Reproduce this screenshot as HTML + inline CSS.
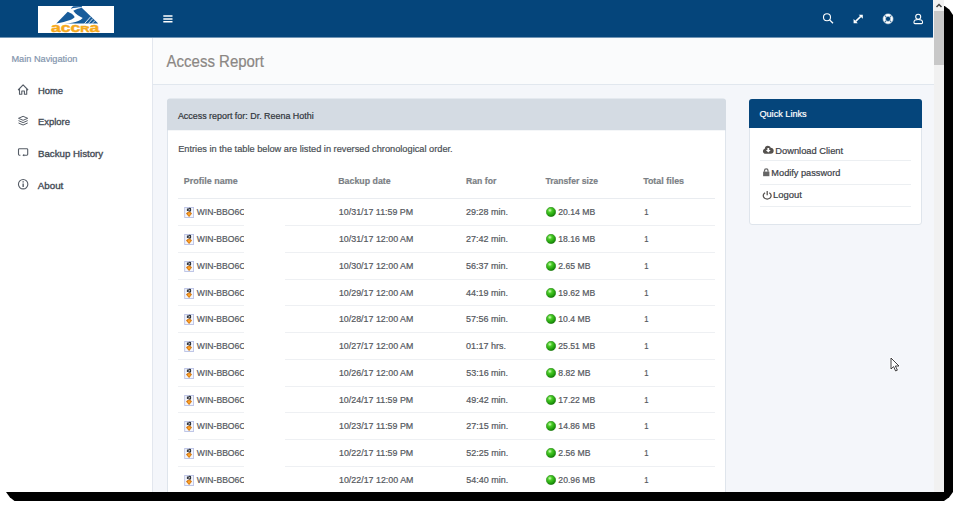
<!DOCTYPE html>
<html><head><meta charset="utf-8"><title>Access Report</title>
<style>
html,body{margin:0;padding:0;background:#fff;}
body{width:959px;height:507px;position:relative;overflow:hidden;font-family:"Liberation Sans",sans-serif;}
#app{position:absolute;left:0;top:0;width:944px;height:492px;overflow:hidden;}
.r{position:absolute;display:block;}
.t{position:absolute;white-space:nowrap;line-height:1;transform-origin:0 0;}
</style></head><body>
<div class="r" style="left:6px;top:5.5px;width:947px;height:495.5px;background:#000;clip-path:polygon(0 0,938px 0,943.3px 3.9px,947px 9.5px,947px 486.5px,943.2px 491.8px,938px 495.5px,8.5px 495.5px,3.8px 491.7px,0 486.5px);"></div>
<div id="app">
<div class="r" style="left:0px;top:0px;width:944px;height:492px;background:#f4f6fa;"></div>
<div class="r" style="left:0px;top:38px;width:152px;height:454px;background:#fff;"></div>
<div class="r" style="left:152px;top:38px;width:1px;height:454px;background:#e3e7ee;"></div>
<div class="r" style="left:153px;top:38px;width:781px;height:46px;background:#fafbfc;"></div>
<div class="r" style="left:153px;top:84px;width:781px;height:1px;background:#e1e7ee;"></div>
<div class="r" style="left:0px;top:0px;width:933px;height:37px;background:#05457b;"></div>
<div class="r" style="left:0px;top:37px;width:933px;height:1px;background:rgba(5,69,123,0.55);"></div>
<div class="r" style="left:934px;top:0px;width:10px;height:492px;background:#f1f1f1;"></div>
<div class="r" style="left:934px;top:11.4px;width:10px;height:54px;background:#c8c8c8;"></div>
<svg class="r" style="left:934px;top:0" width="10" height="11" viewBox="0 0 10 11"><path d="M2.5 7.1 L5 4.5 L7.5 7.1" fill="none" stroke="#454545" stroke-width="1.5"/></svg>
<div class="r" style="left:38px;top:6px;width:76px;height:27px;background:#fff;"></div>
<svg class="r" style="left:52px;top:5px" width="50" height="29" viewBox="0 0 874 507">
<g fill="#185c9b">
<path d="M75 324 L275 118 C322 136 376 166 396 211 C384 246 270 290 75 324 Z"/>
<path d="M372 99 C420 72 480 56 520 48 L808 324 L75 324 C280 323 455 318 537 226 C490 202 412 160 372 99 Z"/>
<path d="M328 66 C345 45 355 30 372 22 L520 18 L524 40 C450 40 390 50 328 66 Z"/>
</g>
<path d="M568 326 L676 205 M633 326 L714 238 M698 326 L752 272" stroke="#fff" stroke-width="15" fill="none"/>
</svg>
<svg class="r" style="left:38px;top:6px" width="76" height="27" viewBox="38 6 76 27"><text x="51" y="32" font-family="Liberation Sans" font-weight="bold" font-size="13" textLength="48.4" lengthAdjust="spacingAndGlyphs" fill="#f6a91b" stroke="#f6a91b" stroke-width="0.45">acc<tspan font-size="9.6">R</tspan>a</text></svg>
<svg class="r" style="left:160px;top:12px" width="16" height="14" viewBox="160 12 16 14"><path d="M163.3 16.1 H172.5 M163.3 18.9 H172.5 M163.3 21.7 H172.5" stroke="#fff" stroke-width="1.5"/></svg>
<svg class="r" style="left:820px;top:10px" width="110" height="18" viewBox="820 10 110 18" fill="none" stroke="#fff">
<circle cx="827" cy="17.3" r="3.5" stroke-width="1.1"/><path d="M829.6 19.9 L833 23.2" stroke-width="1.3"/>
<path d="M855.6 21.4 L860.8 16.4" stroke-width="1.5"/><path d="M858.7 14.7 H862.8 V18.8 Z M853.6 19 V23.2 H857.8 Z" fill="#fff" stroke="none"/>
<circle cx="888.05" cy="18.85" r="3.75" stroke-width="2.3" stroke="#fff"/><path d="M884.3 15.1 L891.8 22.6 M891.8 15.1 L884.3 22.6" stroke="#05457b" stroke-width="1.1" opacity="0.75"/>
<circle cx="888.05" cy="18.85" r="5" stroke-width="0.5"/><circle cx="888.05" cy="18.85" r="2.6" stroke-width="0.5"/>
<circle cx="918.2" cy="16.7" r="2.5" stroke-width="1.1"/><path d="M914 22.8 V22 C914 20.2 915.6 19.5 918.2 19.5 C920.9 19.5 922.5 20.2 922.5 22 V22.8 Q922.5 23.6 921.6 23.6 H914.9 Q914 23.6 914 22.8 Z" stroke-width="1.1" stroke-linejoin="round"/>
</svg>
<svg class="r" style="left:16px;top:82px" width="16" height="114" viewBox="16 82 16 114" fill="none" stroke="#555c66" stroke-width="1.1" stroke-linejoin="round">
<path d="M18.1 90 L23.1 84.8 L28.1 90 M19.5 88.9 V94.3 H21.8 V91 H24.4 V94.3 H26.7 V88.9"/>
<path d="M23.1 116.3 L27.7 118.3 L23.1 120.3 L18.5 118.3 Z M18.5 120.6 L23.1 122.6 L27.7 120.6 M18.5 123 L23.1 125 L27.7 123" stroke-width="1"/>
<path d="M20.4 155.2 H19.4 Q18.5 155.2 18.5 154.3 V149.6 Q18.5 148.7 19.4 148.7 H26.8 Q27.7 148.7 27.7 149.6 V154.3 Q27.7 155.2 26.8 155.2 H23"/><path d="M24.2 153.9 L22.4 155.2 L24.2 156.5 Z" fill="#555c66" stroke="none"/>
<circle cx="23.15" cy="184.2" r="4.7"/><path d="M23.15 183.5 V186.9 M23.15 181.2 V182.5" stroke-width="1.4"/>
</svg>
<div class="r" style="left:167px;top:99px;width:559px;height:400px;background:#fff;border:1px solid #dfe5ec;border-radius:3px 3px 0 0;box-sizing:border-box;"></div>
<svg class="r" style="left:166px;top:97px" width="562" height="35" viewBox="166 97 562 35"><path d="M167 130.3 V101.5 Q167 98.5 170 98.5 H723 Q726 98.5 726 101.5 V130.3 Z" fill="#d4dbe3"/></svg>
<div class="r" style="left:178px;top:198px;width:537px;height:1px;background:#e9ecf0;"></div>
<svg width="0" height="0" style="position:absolute"><defs><radialGradient id="g" cx="0.38" cy="0.32" r="0.75"><stop offset="0" stop-color="#d4ffbe"/><stop offset="0.3" stop-color="#49cc26"/><stop offset="0.75" stop-color="#1f9a0c"/><stop offset="1" stop-color="#0d6604"/></radialGradient></defs></svg>
<div class="r" style="left:178px;top:225.0px;width:537px;height:1px;background:#eef0f3;"></div>
<svg class="r" style="left:184px;top:206px" width="10" height="12" viewBox="0 0 10 12"><rect x="0.7" y="1.5" width="8.9" height="10" fill="#f3f6fd" stroke="#b9c0e4" stroke-width="0.9"/><path d="M3.4 2.4 V5.1 M4.8 2.8 Q4.8 2.3 5.7 2.3 Q6.6 2.3 6.6 3 V4.4 Q6.6 5.1 5.7 5.1 Q4.8 5.1 4.8 4.4 Z" stroke="#23262f" stroke-width="1.05" fill="none"/><path d="M4 5.7 H6.2 L8 7.6 L5.1 10.9 L2 7.6 Z" fill="#cf720f"/><circle cx="5.1" cy="7.9" r="1.55" fill="#f9a02a"/></svg>
<svg class="r" style="left:546px;top:207.40px" width="10" height="10" viewBox="0 0 10 10"><circle cx="5" cy="5" r="4.7" fill="url(#g)" stroke="#1c7d0c" stroke-width="0.5"/></svg>
<div class="r" style="left:178px;top:251.75px;width:537px;height:1px;background:#eef0f3;"></div>
<svg class="r" style="left:184px;top:233px" width="10" height="12" viewBox="0 0 10 12"><rect x="0.7" y="1.5" width="8.9" height="10" fill="#f3f6fd" stroke="#b9c0e4" stroke-width="0.9"/><path d="M3.4 2.4 V5.1 M4.8 2.8 Q4.8 2.3 5.7 2.3 Q6.6 2.3 6.6 3 V4.4 Q6.6 5.1 5.7 5.1 Q4.8 5.1 4.8 4.4 Z" stroke="#23262f" stroke-width="1.05" fill="none"/><path d="M4 5.7 H6.2 L8 7.6 L5.1 10.9 L2 7.6 Z" fill="#cf720f"/><circle cx="5.1" cy="7.9" r="1.55" fill="#f9a02a"/></svg>
<svg class="r" style="left:546px;top:234.40px" width="10" height="10" viewBox="0 0 10 10"><circle cx="5" cy="5" r="4.7" fill="url(#g)" stroke="#1c7d0c" stroke-width="0.5"/></svg>
<div class="r" style="left:178px;top:278.5px;width:537px;height:1px;background:#eef0f3;"></div>
<svg class="r" style="left:184px;top:260px" width="10" height="12" viewBox="0 0 10 12"><rect x="0.7" y="1.5" width="8.9" height="10" fill="#f3f6fd" stroke="#b9c0e4" stroke-width="0.9"/><path d="M3.4 2.4 V5.1 M4.8 2.8 Q4.8 2.3 5.7 2.3 Q6.6 2.3 6.6 3 V4.4 Q6.6 5.1 5.7 5.1 Q4.8 5.1 4.8 4.4 Z" stroke="#23262f" stroke-width="1.05" fill="none"/><path d="M4 5.7 H6.2 L8 7.6 L5.1 10.9 L2 7.6 Z" fill="#cf720f"/><circle cx="5.1" cy="7.9" r="1.55" fill="#f9a02a"/></svg>
<svg class="r" style="left:546px;top:261.40px" width="10" height="10" viewBox="0 0 10 10"><circle cx="5" cy="5" r="4.7" fill="url(#g)" stroke="#1c7d0c" stroke-width="0.5"/></svg>
<div class="r" style="left:178px;top:305.25px;width:537px;height:1px;background:#eef0f3;"></div>
<svg class="r" style="left:184px;top:287px" width="10" height="12" viewBox="0 0 10 12"><rect x="0.7" y="1.5" width="8.9" height="10" fill="#f3f6fd" stroke="#b9c0e4" stroke-width="0.9"/><path d="M3.4 2.4 V5.1 M4.8 2.8 Q4.8 2.3 5.7 2.3 Q6.6 2.3 6.6 3 V4.4 Q6.6 5.1 5.7 5.1 Q4.8 5.1 4.8 4.4 Z" stroke="#23262f" stroke-width="1.05" fill="none"/><path d="M4 5.7 H6.2 L8 7.6 L5.1 10.9 L2 7.6 Z" fill="#cf720f"/><circle cx="5.1" cy="7.9" r="1.55" fill="#f9a02a"/></svg>
<svg class="r" style="left:546px;top:288.40px" width="10" height="10" viewBox="0 0 10 10"><circle cx="5" cy="5" r="4.7" fill="url(#g)" stroke="#1c7d0c" stroke-width="0.5"/></svg>
<div class="r" style="left:178px;top:332.0px;width:537px;height:1px;background:#eef0f3;"></div>
<svg class="r" style="left:184px;top:313px" width="10" height="12" viewBox="0 0 10 12"><rect x="0.7" y="1.5" width="8.9" height="10" fill="#f3f6fd" stroke="#b9c0e4" stroke-width="0.9"/><path d="M3.4 2.4 V5.1 M4.8 2.8 Q4.8 2.3 5.7 2.3 Q6.6 2.3 6.6 3 V4.4 Q6.6 5.1 5.7 5.1 Q4.8 5.1 4.8 4.4 Z" stroke="#23262f" stroke-width="1.05" fill="none"/><path d="M4 5.7 H6.2 L8 7.6 L5.1 10.9 L2 7.6 Z" fill="#cf720f"/><circle cx="5.1" cy="7.9" r="1.55" fill="#f9a02a"/></svg>
<svg class="r" style="left:546px;top:314.40px" width="10" height="10" viewBox="0 0 10 10"><circle cx="5" cy="5" r="4.7" fill="url(#g)" stroke="#1c7d0c" stroke-width="0.5"/></svg>
<div class="r" style="left:178px;top:358.75px;width:537px;height:1px;background:#eef0f3;"></div>
<svg class="r" style="left:184px;top:340px" width="10" height="12" viewBox="0 0 10 12"><rect x="0.7" y="1.5" width="8.9" height="10" fill="#f3f6fd" stroke="#b9c0e4" stroke-width="0.9"/><path d="M3.4 2.4 V5.1 M4.8 2.8 Q4.8 2.3 5.7 2.3 Q6.6 2.3 6.6 3 V4.4 Q6.6 5.1 5.7 5.1 Q4.8 5.1 4.8 4.4 Z" stroke="#23262f" stroke-width="1.05" fill="none"/><path d="M4 5.7 H6.2 L8 7.6 L5.1 10.9 L2 7.6 Z" fill="#cf720f"/><circle cx="5.1" cy="7.9" r="1.55" fill="#f9a02a"/></svg>
<svg class="r" style="left:546px;top:341.40px" width="10" height="10" viewBox="0 0 10 10"><circle cx="5" cy="5" r="4.7" fill="url(#g)" stroke="#1c7d0c" stroke-width="0.5"/></svg>
<div class="r" style="left:178px;top:385.5px;width:537px;height:1px;background:#eef0f3;"></div>
<svg class="r" style="left:184px;top:367px" width="10" height="12" viewBox="0 0 10 12"><rect x="0.7" y="1.5" width="8.9" height="10" fill="#f3f6fd" stroke="#b9c0e4" stroke-width="0.9"/><path d="M3.4 2.4 V5.1 M4.8 2.8 Q4.8 2.3 5.7 2.3 Q6.6 2.3 6.6 3 V4.4 Q6.6 5.1 5.7 5.1 Q4.8 5.1 4.8 4.4 Z" stroke="#23262f" stroke-width="1.05" fill="none"/><path d="M4 5.7 H6.2 L8 7.6 L5.1 10.9 L2 7.6 Z" fill="#cf720f"/><circle cx="5.1" cy="7.9" r="1.55" fill="#f9a02a"/></svg>
<svg class="r" style="left:546px;top:368.40px" width="10" height="10" viewBox="0 0 10 10"><circle cx="5" cy="5" r="4.7" fill="url(#g)" stroke="#1c7d0c" stroke-width="0.5"/></svg>
<div class="r" style="left:178px;top:412.25px;width:537px;height:1px;background:#eef0f3;"></div>
<svg class="r" style="left:184px;top:394px" width="10" height="12" viewBox="0 0 10 12"><rect x="0.7" y="1.5" width="8.9" height="10" fill="#f3f6fd" stroke="#b9c0e4" stroke-width="0.9"/><path d="M3.4 2.4 V5.1 M4.8 2.8 Q4.8 2.3 5.7 2.3 Q6.6 2.3 6.6 3 V4.4 Q6.6 5.1 5.7 5.1 Q4.8 5.1 4.8 4.4 Z" stroke="#23262f" stroke-width="1.05" fill="none"/><path d="M4 5.7 H6.2 L8 7.6 L5.1 10.9 L2 7.6 Z" fill="#cf720f"/><circle cx="5.1" cy="7.9" r="1.55" fill="#f9a02a"/></svg>
<svg class="r" style="left:546px;top:395.40px" width="10" height="10" viewBox="0 0 10 10"><circle cx="5" cy="5" r="4.7" fill="url(#g)" stroke="#1c7d0c" stroke-width="0.5"/></svg>
<div class="r" style="left:178px;top:439.0px;width:537px;height:1px;background:#eef0f3;"></div>
<svg class="r" style="left:184px;top:420px" width="10" height="12" viewBox="0 0 10 12"><rect x="0.7" y="1.5" width="8.9" height="10" fill="#f3f6fd" stroke="#b9c0e4" stroke-width="0.9"/><path d="M3.4 2.4 V5.1 M4.8 2.8 Q4.8 2.3 5.7 2.3 Q6.6 2.3 6.6 3 V4.4 Q6.6 5.1 5.7 5.1 Q4.8 5.1 4.8 4.4 Z" stroke="#23262f" stroke-width="1.05" fill="none"/><path d="M4 5.7 H6.2 L8 7.6 L5.1 10.9 L2 7.6 Z" fill="#cf720f"/><circle cx="5.1" cy="7.9" r="1.55" fill="#f9a02a"/></svg>
<svg class="r" style="left:546px;top:421.40px" width="10" height="10" viewBox="0 0 10 10"><circle cx="5" cy="5" r="4.7" fill="url(#g)" stroke="#1c7d0c" stroke-width="0.5"/></svg>
<div class="r" style="left:178px;top:465.75px;width:537px;height:1px;background:#eef0f3;"></div>
<svg class="r" style="left:184px;top:447px" width="10" height="12" viewBox="0 0 10 12"><rect x="0.7" y="1.5" width="8.9" height="10" fill="#f3f6fd" stroke="#b9c0e4" stroke-width="0.9"/><path d="M3.4 2.4 V5.1 M4.8 2.8 Q4.8 2.3 5.7 2.3 Q6.6 2.3 6.6 3 V4.4 Q6.6 5.1 5.7 5.1 Q4.8 5.1 4.8 4.4 Z" stroke="#23262f" stroke-width="1.05" fill="none"/><path d="M4 5.7 H6.2 L8 7.6 L5.1 10.9 L2 7.6 Z" fill="#cf720f"/><circle cx="5.1" cy="7.9" r="1.55" fill="#f9a02a"/></svg>
<svg class="r" style="left:546px;top:448.40px" width="10" height="10" viewBox="0 0 10 10"><circle cx="5" cy="5" r="4.7" fill="url(#g)" stroke="#1c7d0c" stroke-width="0.5"/></svg>
<div class="r" style="left:178px;top:492.5px;width:537px;height:1px;background:#eef0f3;"></div>
<svg class="r" style="left:184px;top:474px" width="10" height="12" viewBox="0 0 10 12"><rect x="0.7" y="1.5" width="8.9" height="10" fill="#f3f6fd" stroke="#b9c0e4" stroke-width="0.9"/><path d="M3.4 2.4 V5.1 M4.8 2.8 Q4.8 2.3 5.7 2.3 Q6.6 2.3 6.6 3 V4.4 Q6.6 5.1 5.7 5.1 Q4.8 5.1 4.8 4.4 Z" stroke="#23262f" stroke-width="1.05" fill="none"/><path d="M4 5.7 H6.2 L8 7.6 L5.1 10.9 L2 7.6 Z" fill="#cf720f"/><circle cx="5.1" cy="7.9" r="1.55" fill="#f9a02a"/></svg>
<svg class="r" style="left:546px;top:475.40px" width="10" height="10" viewBox="0 0 10 10"><circle cx="5" cy="5" r="4.7" fill="url(#g)" stroke="#1c7d0c" stroke-width="0.5"/></svg>
<svg class="r" style="left:0;top:0" width="944" height="492" viewBox="0 0 944 492" font-family="Liberation Sans, sans-serif"><g transform="skewX(0.02)"><text x="11.40" y="61.60" font-size="9.0" textLength="65.98" lengthAdjust="spacingAndGlyphs" fill="#8496ae" stroke="#8496ae" stroke-width="0.2">Main Navigation</text>
<text x="37.90" y="94.00" font-size="8.73" textLength="25.11" lengthAdjust="spacingAndGlyphs" fill="#444b55" stroke="#444b55" stroke-width="0.32">Home</text>
<text x="37.90" y="125.20" font-size="8.73" textLength="32.00" lengthAdjust="spacingAndGlyphs" fill="#444b55" stroke="#444b55" stroke-width="0.32">Explore</text>
<text x="37.90" y="156.70" font-size="8.73" textLength="65.20" lengthAdjust="spacingAndGlyphs" fill="#444b55" stroke="#444b55" stroke-width="0.32">Backup History</text>
<text x="37.70" y="188.50" font-size="8.73" textLength="25.58" lengthAdjust="spacingAndGlyphs" fill="#444b55" stroke="#444b55" stroke-width="0.32">About</text>
<text x="166.60" y="67.00" font-size="15.66" textLength="97.41" lengthAdjust="spacingAndGlyphs" fill="#8b8784" stroke="#8b8784" stroke-width="0.2">Access Report</text>
<text x="177.90" y="119.00" font-size="9.18" textLength="135.69" lengthAdjust="spacingAndGlyphs" fill="#2f343a" stroke="#2f343a" stroke-width="0.2">Access report for: Dr. Reena Hothi</text>
<text x="178.10" y="152.30" font-size="9.18" textLength="274.52" lengthAdjust="spacingAndGlyphs" fill="#4a4f55" stroke="#4a4f55" stroke-width="0.2">Entries in the table below are listed in reversed chronological order.</text>
<text x="183.80" y="183.80" font-size="9.18" textLength="53.82" lengthAdjust="spacingAndGlyphs" fill="#7b7f85" font-weight="bold" stroke="#7b7f85" stroke-width="0.2">Profile name</text>
<text x="338.20" y="183.80" font-size="9.18" textLength="52.41" lengthAdjust="spacingAndGlyphs" fill="#7b7f85" font-weight="bold" stroke="#7b7f85" stroke-width="0.2">Backup date</text>
<text x="466.00" y="183.80" font-size="9.18" textLength="30.28" lengthAdjust="spacingAndGlyphs" fill="#7b7f85" font-weight="bold" stroke="#7b7f85" stroke-width="0.2">Ran for</text>
<text x="545.40" y="183.80" font-size="9.18" textLength="52.50" lengthAdjust="spacingAndGlyphs" fill="#7b7f85" font-weight="bold" stroke="#7b7f85" stroke-width="0.2">Transfer size</text>
<text x="643.10" y="183.80" font-size="9.18" textLength="40.88" lengthAdjust="spacingAndGlyphs" fill="#7b7f85" font-weight="bold" stroke="#7b7f85" stroke-width="0.2">Total files</text>
<text x="196.70" y="215.40" font-size="9.0" textLength="48.70" lengthAdjust="spacingAndGlyphs" fill="#54585e" stroke="#54585e" stroke-width="0.2">WIN-BBO6C</text>
<text x="338.80" y="215.40" font-size="9.0" textLength="74.29" lengthAdjust="spacingAndGlyphs" fill="#54585e" stroke="#54585e" stroke-width="0.2">10/31/17 11:59 PM</text>
<text x="466.00" y="215.40" font-size="9.0" textLength="41.98" lengthAdjust="spacingAndGlyphs" fill="#54585e" stroke="#54585e" stroke-width="0.2">29:28 min.</text>
<text x="558.20" y="215.40" font-size="9.0" textLength="36.92" lengthAdjust="spacingAndGlyphs" fill="#54585e" stroke="#54585e" stroke-width="0.2">20.14 MB</text>
<text x="644.10" y="215.40" font-size="9.0" textLength="4.30" lengthAdjust="spacingAndGlyphs" fill="#54585e" stroke="#54585e" stroke-width="0.2">1</text>
<text x="196.70" y="242.15" font-size="9.0" textLength="48.70" lengthAdjust="spacingAndGlyphs" fill="#54585e" stroke="#54585e" stroke-width="0.2">WIN-BBO6C</text>
<text x="338.80" y="242.15" font-size="9.0" textLength="74.49" lengthAdjust="spacingAndGlyphs" fill="#54585e" stroke="#54585e" stroke-width="0.2">10/31/17 12:00 AM</text>
<text x="466.00" y="242.15" font-size="9.0" textLength="41.98" lengthAdjust="spacingAndGlyphs" fill="#54585e" stroke="#54585e" stroke-width="0.2">27:42 min.</text>
<text x="558.20" y="242.15" font-size="9.0" textLength="36.92" lengthAdjust="spacingAndGlyphs" fill="#54585e" stroke="#54585e" stroke-width="0.2">18.16 MB</text>
<text x="644.10" y="242.15" font-size="9.0" textLength="4.30" lengthAdjust="spacingAndGlyphs" fill="#54585e" stroke="#54585e" stroke-width="0.2">1</text>
<text x="196.70" y="268.90" font-size="9.0" textLength="48.70" lengthAdjust="spacingAndGlyphs" fill="#54585e" stroke="#54585e" stroke-width="0.2">WIN-BBO6C</text>
<text x="338.80" y="268.90" font-size="9.0" textLength="74.49" lengthAdjust="spacingAndGlyphs" fill="#54585e" stroke="#54585e" stroke-width="0.2">10/30/17 12:00 AM</text>
<text x="466.00" y="268.90" font-size="9.0" textLength="41.98" lengthAdjust="spacingAndGlyphs" fill="#54585e" stroke="#54585e" stroke-width="0.2">56:37 min.</text>
<text x="558.20" y="268.90" font-size="9.0" textLength="32.22" lengthAdjust="spacingAndGlyphs" fill="#54585e" stroke="#54585e" stroke-width="0.2">2.65 MB</text>
<text x="644.10" y="268.90" font-size="9.0" textLength="4.30" lengthAdjust="spacingAndGlyphs" fill="#54585e" stroke="#54585e" stroke-width="0.2">1</text>
<text x="196.70" y="295.65" font-size="9.0" textLength="48.70" lengthAdjust="spacingAndGlyphs" fill="#54585e" stroke="#54585e" stroke-width="0.2">WIN-BBO6C</text>
<text x="338.80" y="295.65" font-size="9.0" textLength="74.49" lengthAdjust="spacingAndGlyphs" fill="#54585e" stroke="#54585e" stroke-width="0.2">10/29/17 12:00 AM</text>
<text x="466.00" y="295.65" font-size="9.0" textLength="41.98" lengthAdjust="spacingAndGlyphs" fill="#54585e" stroke="#54585e" stroke-width="0.2">44:19 min.</text>
<text x="558.20" y="295.65" font-size="9.0" textLength="36.92" lengthAdjust="spacingAndGlyphs" fill="#54585e" stroke="#54585e" stroke-width="0.2">19.62 MB</text>
<text x="644.10" y="295.65" font-size="9.0" textLength="4.30" lengthAdjust="spacingAndGlyphs" fill="#54585e" stroke="#54585e" stroke-width="0.2">1</text>
<text x="196.70" y="322.40" font-size="9.0" textLength="48.70" lengthAdjust="spacingAndGlyphs" fill="#54585e" stroke="#54585e" stroke-width="0.2">WIN-BBO6C</text>
<text x="338.80" y="322.40" font-size="9.0" textLength="74.49" lengthAdjust="spacingAndGlyphs" fill="#54585e" stroke="#54585e" stroke-width="0.2">10/28/17 12:00 AM</text>
<text x="466.00" y="322.40" font-size="9.0" textLength="41.98" lengthAdjust="spacingAndGlyphs" fill="#54585e" stroke="#54585e" stroke-width="0.2">57:56 min.</text>
<text x="558.20" y="322.40" font-size="9.0" textLength="32.22" lengthAdjust="spacingAndGlyphs" fill="#54585e" stroke="#54585e" stroke-width="0.2">10.4 MB</text>
<text x="644.10" y="322.40" font-size="9.0" textLength="4.30" lengthAdjust="spacingAndGlyphs" fill="#54585e" stroke="#54585e" stroke-width="0.2">1</text>
<text x="196.70" y="349.15" font-size="9.0" textLength="48.70" lengthAdjust="spacingAndGlyphs" fill="#54585e" stroke="#54585e" stroke-width="0.2">WIN-BBO6C</text>
<text x="338.80" y="349.15" font-size="9.0" textLength="74.49" lengthAdjust="spacingAndGlyphs" fill="#54585e" stroke="#54585e" stroke-width="0.2">10/27/17 12:00 AM</text>
<text x="466.00" y="349.15" font-size="9.0" textLength="39.99" lengthAdjust="spacingAndGlyphs" fill="#54585e" stroke="#54585e" stroke-width="0.2">01:17 hrs.</text>
<text x="558.20" y="349.15" font-size="9.0" textLength="36.92" lengthAdjust="spacingAndGlyphs" fill="#54585e" stroke="#54585e" stroke-width="0.2">25.51 MB</text>
<text x="644.10" y="349.15" font-size="9.0" textLength="4.30" lengthAdjust="spacingAndGlyphs" fill="#54585e" stroke="#54585e" stroke-width="0.2">1</text>
<text x="196.70" y="375.90" font-size="9.0" textLength="48.70" lengthAdjust="spacingAndGlyphs" fill="#54585e" stroke="#54585e" stroke-width="0.2">WIN-BBO6C</text>
<text x="338.80" y="375.90" font-size="9.0" textLength="74.49" lengthAdjust="spacingAndGlyphs" fill="#54585e" stroke="#54585e" stroke-width="0.2">10/26/17 12:00 AM</text>
<text x="466.00" y="375.90" font-size="9.0" textLength="41.98" lengthAdjust="spacingAndGlyphs" fill="#54585e" stroke="#54585e" stroke-width="0.2">53:16 min.</text>
<text x="558.20" y="375.90" font-size="9.0" textLength="32.22" lengthAdjust="spacingAndGlyphs" fill="#54585e" stroke="#54585e" stroke-width="0.2">8.82 MB</text>
<text x="644.10" y="375.90" font-size="9.0" textLength="4.30" lengthAdjust="spacingAndGlyphs" fill="#54585e" stroke="#54585e" stroke-width="0.2">1</text>
<text x="196.70" y="402.65" font-size="9.0" textLength="48.70" lengthAdjust="spacingAndGlyphs" fill="#54585e" stroke="#54585e" stroke-width="0.2">WIN-BBO6C</text>
<text x="338.80" y="402.65" font-size="9.0" textLength="74.29" lengthAdjust="spacingAndGlyphs" fill="#54585e" stroke="#54585e" stroke-width="0.2">10/24/17 11:59 PM</text>
<text x="466.00" y="402.65" font-size="9.0" textLength="41.98" lengthAdjust="spacingAndGlyphs" fill="#54585e" stroke="#54585e" stroke-width="0.2">49:42 min.</text>
<text x="558.20" y="402.65" font-size="9.0" textLength="36.92" lengthAdjust="spacingAndGlyphs" fill="#54585e" stroke="#54585e" stroke-width="0.2">17.22 MB</text>
<text x="644.10" y="402.65" font-size="9.0" textLength="4.30" lengthAdjust="spacingAndGlyphs" fill="#54585e" stroke="#54585e" stroke-width="0.2">1</text>
<text x="196.70" y="429.40" font-size="9.0" textLength="48.70" lengthAdjust="spacingAndGlyphs" fill="#54585e" stroke="#54585e" stroke-width="0.2">WIN-BBO6C</text>
<text x="338.80" y="429.40" font-size="9.0" textLength="74.29" lengthAdjust="spacingAndGlyphs" fill="#54585e" stroke="#54585e" stroke-width="0.2">10/23/17 11:59 PM</text>
<text x="466.00" y="429.40" font-size="9.0" textLength="41.98" lengthAdjust="spacingAndGlyphs" fill="#54585e" stroke="#54585e" stroke-width="0.2">27:15 min.</text>
<text x="558.20" y="429.40" font-size="9.0" textLength="36.92" lengthAdjust="spacingAndGlyphs" fill="#54585e" stroke="#54585e" stroke-width="0.2">14.86 MB</text>
<text x="644.10" y="429.40" font-size="9.0" textLength="4.30" lengthAdjust="spacingAndGlyphs" fill="#54585e" stroke="#54585e" stroke-width="0.2">1</text>
<text x="196.70" y="456.15" font-size="9.0" textLength="48.70" lengthAdjust="spacingAndGlyphs" fill="#54585e" stroke="#54585e" stroke-width="0.2">WIN-BBO6C</text>
<text x="338.80" y="456.15" font-size="9.0" textLength="74.29" lengthAdjust="spacingAndGlyphs" fill="#54585e" stroke="#54585e" stroke-width="0.2">10/22/17 11:59 PM</text>
<text x="466.00" y="456.15" font-size="9.0" textLength="41.98" lengthAdjust="spacingAndGlyphs" fill="#54585e" stroke="#54585e" stroke-width="0.2">52:25 min.</text>
<text x="558.20" y="456.15" font-size="9.0" textLength="32.22" lengthAdjust="spacingAndGlyphs" fill="#54585e" stroke="#54585e" stroke-width="0.2">2.56 MB</text>
<text x="644.10" y="456.15" font-size="9.0" textLength="4.30" lengthAdjust="spacingAndGlyphs" fill="#54585e" stroke="#54585e" stroke-width="0.2">1</text>
<text x="196.70" y="482.90" font-size="9.0" textLength="48.70" lengthAdjust="spacingAndGlyphs" fill="#54585e" stroke="#54585e" stroke-width="0.2">WIN-BBO6C</text>
<text x="338.80" y="482.90" font-size="9.0" textLength="74.49" lengthAdjust="spacingAndGlyphs" fill="#54585e" stroke="#54585e" stroke-width="0.2">10/22/17 12:00 AM</text>
<text x="466.00" y="482.90" font-size="9.0" textLength="41.98" lengthAdjust="spacingAndGlyphs" fill="#54585e" stroke="#54585e" stroke-width="0.2">54:40 min.</text>
<text x="558.20" y="482.90" font-size="9.0" textLength="36.92" lengthAdjust="spacingAndGlyphs" fill="#54585e" stroke="#54585e" stroke-width="0.2">20.96 MB</text>
<text x="644.10" y="482.90" font-size="9.0" textLength="4.30" lengthAdjust="spacingAndGlyphs" fill="#54585e" stroke="#54585e" stroke-width="0.2">1</text></g></svg>
<div class="r" style="left:244.2px;top:199.5px;width:41px;height:293px;background:#fff;"></div>
<div class="r" style="left:749px;top:99px;width:173px;height:126px;background:#fff;border:1px solid #dfe5ec;border-radius:3px;box-sizing:border-box;"></div>
<div class="r" style="left:749px;top:99px;width:173px;height:29px;background:#05457b;border-radius:3px 3px 0 0;"></div>
<div class="r" style="left:759.5px;top:160.4px;width:151.5px;height:1px;background:#eceff2;"></div>
<div class="r" style="left:759.5px;top:183.7px;width:151.5px;height:1px;background:#eceff2;"></div>
<div class="r" style="left:759.5px;top:206.1px;width:151.5px;height:1px;background:#eceff2;"></div>
<svg class="r" style="left:762px;top:144px" width="14" height="58" viewBox="762 144 14 58">
<path d="M765.7 153.8 C764 153.8 762.9 152.7 762.9 151.2 C762.9 150 763.7 149 764.8 148.7 C764.8 147 766.2 145.8 767.8 145.8 C769.1 145.8 770.2 146.5 770.7 147.7 C772.4 147.7 773.7 149 773.7 150.7 C773.7 152.5 772.5 153.8 770.9 153.8 Z" fill="#55524f"/>
<path d="M767.4 147.9 H769.2 V150 H770.7 L768.3 152.6 L765.9 150 H767.4 Z" fill="#fff"/>
<path d="M763.1 171.6 H769.4 V176.2 H763.1 Z" fill="#666"/><path d="M764.5 171.8 V170.7 C764.5 168.3 768 168.3 768 170.7 V171.8" fill="none" stroke="#666" stroke-width="1.25"/>
<path d="M765.1 192.7 C761.9 194.8 763.2 199 767.2 199 C771.2 199 772.5 194.8 769.3 192.7" fill="none" stroke="#55524f" stroke-width="1.25"/><path d="M767.2 191 V195.3" stroke="#55524f" stroke-width="1.25"/>
</svg>
<svg class="r" style="left:0;top:0" width="944" height="492" viewBox="0 0 944 492" font-family="Liberation Sans, sans-serif"><g transform="skewX(0.02)"><text x="759.40" y="117.30" font-size="9.18" textLength="47.19" lengthAdjust="spacingAndGlyphs" fill="#fff" stroke="#fff" stroke-width="0.2">Quick Links</text>
<text x="775.20" y="154.00" font-size="9.18" textLength="67.88" lengthAdjust="spacingAndGlyphs" fill="#3b4046" stroke="#3b4046" stroke-width="0.2">Download Client</text>
<text x="771.30" y="175.80" font-size="9.18" textLength="69.00" lengthAdjust="spacingAndGlyphs" fill="#3b4046" stroke="#3b4046" stroke-width="0.2">Modify password</text>
<text x="773.00" y="198.10" font-size="9.18" textLength="28.89" lengthAdjust="spacingAndGlyphs" fill="#3b4046" stroke="#3b4046" stroke-width="0.2">Logout</text></g></svg>
<svg class="r" style="left:889.4px;top:356.4px" width="13" height="18" viewBox="-1 -1 13 18"><path d="M1 1 V12 L3.6 9.6 L5.6 14 L7.4 13.2 L5.4 9 H9 Z" fill="#fff" stroke="#fff" stroke-width="2.4" stroke-linejoin="round"/><path d="M1 1 V12 L3.6 9.6 L5.6 14 L7.4 13.2 L5.4 9 H9 Z" fill="#fff" stroke="#2a2a2e" stroke-width="0.9"/></svg>
</div>
</body></html>
